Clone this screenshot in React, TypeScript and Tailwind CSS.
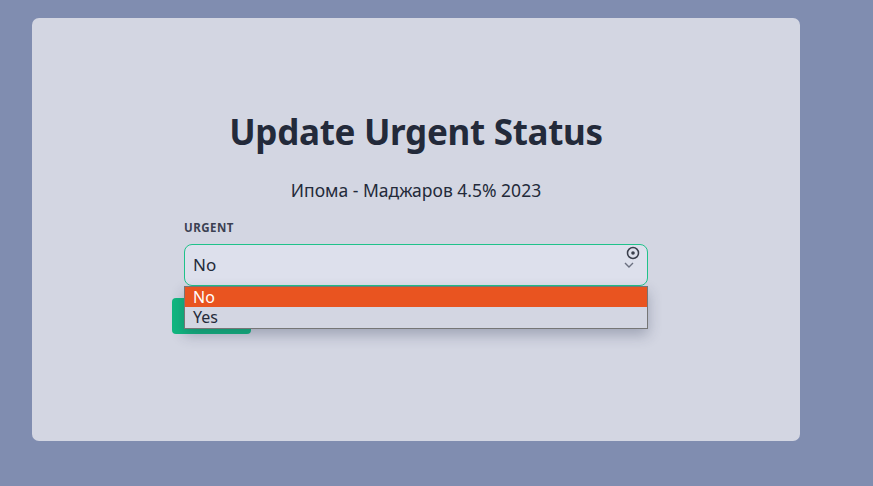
import React from "react";

export default function App() {
  return (
    <div
      className="w-[873px] h-[486px] bg-[#808db0] pt-[18px] pl-[32px]"
      style={{ fontFamily: '"Noto Sans", "Open Sans", sans-serif' }}
    >
      <div className="w-[768px] h-[423px] bg-[#d3d6e2] rounded-[7px] flex flex-col items-center pt-[92px]">
        <h1 className="text-[35px] leading-[44px] font-bold text-[#232a3a] tracking-[-0.3px]">
          Update Urgent Status
        </h1>
        <p className="mt-[24px] text-[17.5px] leading-[24px] text-[#232a3a]">
          Ипома - Маджаров 4.5% 2023
        </p>
        <div className="w-[464px] mt-[18px] flex flex-col">
          <label className="text-[11.5px] leading-[16px] font-bold text-[#3b4152] tracking-[0.5px]">
            URGENT
          </label>
          <div className="relative mt-[8px]">
            <div className="h-[42px] rounded-[8px] border border-[#1fc28a] bg-[#dde0ec] flex items-center pl-[8px] text-[17px] text-[#232a3a]">
              No
              <svg
                className="absolute right-[8px] top-[2px]"
                width="16"
                height="26"
                viewBox="0 0 16 26"
                fill="none"
              >
                <circle cx="9" cy="7" r="5.5" stroke="#3a3f4c" strokeWidth="1.5" />
                <circle cx="9" cy="7" r="1.8" fill="#3a3f4c" />
                <path d="M1 17 L5 21 L9 17" stroke="#6b7080" strokeWidth="1.4" />
              </svg>
            </div>
            <div className="absolute left-0 top-[42px] w-[464px] border border-[#767676] bg-[#d3d6e2] shadow-[0_6px_14px_rgba(40,50,80,0.3)] z-10 text-[16px] leading-[20px]">
              <div className="h-[20px] bg-[#e95420] text-white pl-[8px]">No</div>
              <div className="h-[21px] text-[#232a3a] pl-[8px]">Yes</div>
            </div>
          </div>
          <button
            aria-label="Save"
            className="-ml-[12px] mt-[12px] w-[79px] h-[36px] rounded-[4px] bg-[#10b77f]"
          />
        </div>
      </div>
    </div>
  );
}
